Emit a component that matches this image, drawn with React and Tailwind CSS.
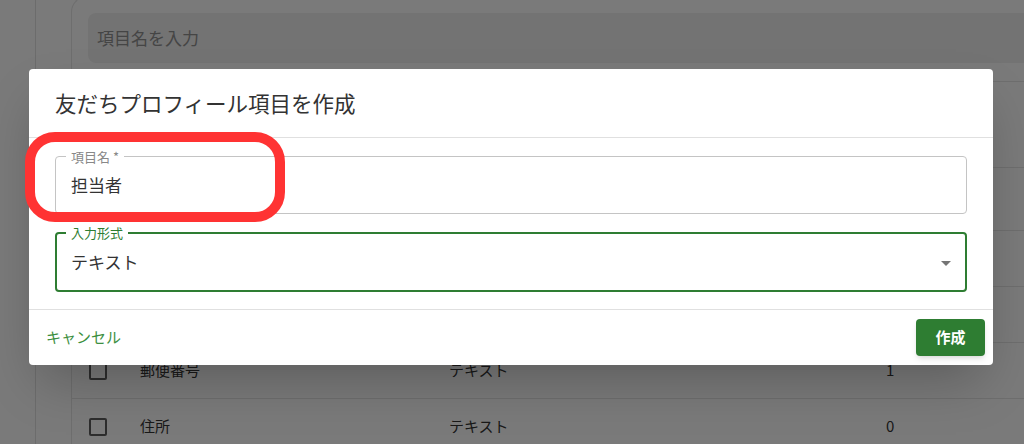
import React from 'react';

const font = { fontFamily: '"Noto Sans CJK JP", "Noto Sans", sans-serif' };

const rows = [
    { name: '氏名', type: 'テキスト', count: '3' },
    { name: '電話番号', type: 'テキスト', count: '2' },
    { name: '郵便番号', type: 'テキスト', count: '1' },
    { name: '住所', type: 'テキスト', count: '0' },
];

const Checkbox = () => (
    <div className="w-[18px] h-[18px] border-2 border-[#5a5a5a] rounded-[2px] shrink-0" />
);

const Background = () => (
    <div className="flex h-[444px] bg-[#f5f5f5] overflow-hidden">
        <div className="w-[36px] shrink-0 border-r border-[#d8d8d8] bg-[#f5f5f5]" />
        <div className="flex-1 pl-[35px]">
            <div className="w-[1000px] -mt-[4px] bg-[#f5f5f5] border-l border-t border-[#dcdcdc] rounded-tl-2xl">
                <div className="px-[16px] pt-[16px] pb-[18px]">
                    <div className="h-[50px] rounded-lg bg-[#e6e6e6] flex items-center px-[9px] text-[17px] text-[#8a8a8a]">
                        項目名を入力
                    </div>
                </div>
                <div className="h-[86px] border-t border-[#dcdcdc]" />
                <div className="h-[63px] border-t border-[#dcdcdc]" />
                {rows.map((r) => (
                    <div key={r.name} className="h-[56px] border-t border-[#dcdcdc] flex items-center pl-[17px] text-[15px] text-[#333]">
                        <Checkbox />
                        <span className="ml-[33px] w-[309px]">{r.name}</span>
                        <span className="w-[437px]">{r.type}</span>
                        <span>{r.count}</span>
                    </div>
                ))}
            </div>
        </div>
    </div>
);

const Dialog = () => (
    <div className="relative w-[964px] bg-white rounded-[4px] shadow-2xl">
        <div className="h-[69px] px-[26px] flex items-center text-[21.5px] text-[#333] border-b border-[#e0e0e0]">
            友だちプロフィール項目を作成
        </div>
        <div className="px-[26px] pt-[18px] pb-[17px] border-b border-[#e0e0e0]">
            <div className="relative h-[58px] border border-[#c4c4c4] rounded-[4px] flex items-center pl-[15px] text-[17px] text-[#333]">
                <span className="absolute -top-[7px] left-[10px] px-[5px] bg-white text-[13px] leading-[13px] text-[#888]">
                    項目名 *
                </span>
                担当者
            </div>
            <div className="relative mt-[18px] h-[60px] border-2 border-[#2e7d32] rounded-[4px] flex items-center justify-between pl-[14px] pr-[14px] text-[17px] text-[#333]">
                <span className="absolute -top-[8px] left-[9px] px-[5px] bg-white text-[13px] leading-[13px] text-[#2e7d32]">
                    入力形式
                </span>
                テキスト
                <svg width="10" height="5" viewBox="0 0 10 5" className="mt-[2px]">
                    <path d="M0 0 L5 5 L10 0 Z" fill="#757575" />
                </svg>
            </div>
        </div>
        <div className="h-[55px] flex items-center justify-between pl-[9px] pr-[8px]">
            <button className="px-[8px] py-[6px] text-[15px] text-[#3d8f41] rounded">
                キャンセル
            </button>
            <button className="w-[69px] h-[37px] rounded-[4px] bg-[#2e7d32] text-white text-[15px] font-bold shadow-md">
                作成
            </button>
        </div>
        <div className="absolute left-[-4px] top-[63px] w-[260px] h-[90px] border-[10px] border-[#ff3333] rounded-[30px] pointer-events-none" />
    </div>
);

const App = () => {
    return (
        <div className="relative w-[1024px] h-[444px] overflow-hidden" style={font}>
            <Background />
            <div className="absolute inset-0 bg-black/50 pl-[29px] pt-[69px]">
                <Dialog />
            </div>
        </div>
    );
};

export default App;
